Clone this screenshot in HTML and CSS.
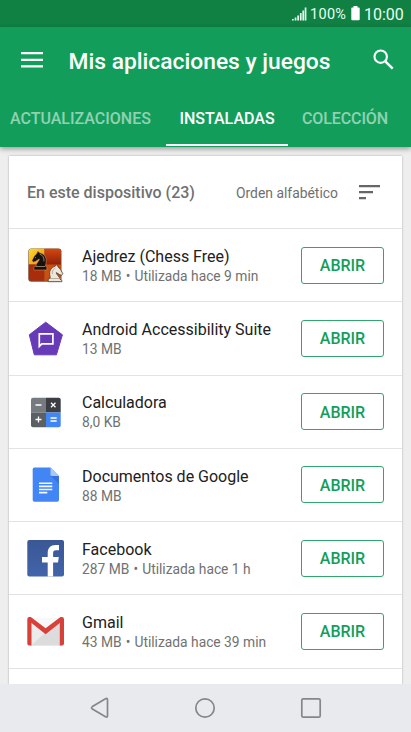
FILE: index.html
```html
<!DOCTYPE html>
<html lang="es">
<head>
<meta charset="utf-8">
<title>Mis aplicaciones y juegos</title>
<link rel="stylesheet" href="styles.css">
</head>
<body>
<div class="screen">
  <div class="status">
    <svg class="signal" width="15" height="14" viewBox="0 0 15 14" fill="#e6fff1"><path d="M0 13.500v-1.500h1.700V13.500zM2.700 13.500v-3h1.700v3zM5.300 13.500V8.500H7v5zM7.900 13.500V6h1.700V13.500zM10.400 13.500V3.500h1.700v10zM12.700 13.500V.5h1.700V13.500z"/></svg>
    <span class="pct">100%</span>
    <svg class="battery" width="9" height="15" viewBox="0 0 9 15" fill="#fff"><path d="M2.500 0h4v1.500H8q.7 0 .7.8v11q0 .9-.9.9H1.200q-.9 0-.9-.9v-11q0-.8.7-.8h1.500z"/></svg>
    <span class="clock">10:00</span>
  </div>
  <header class="appbar">
    <div class="toolbar">
      <svg class="menu" width="22" height="16" viewBox="0 0 22 16" fill="#fff"><path d="M0 0h22v2.200H0zM0 6.700h22v2.200H0zM0 13.300h22v2.200H0z"/></svg>
      <h1>Mis aplicaciones y juegos</h1>
      <svg class="search" width="21" height="21" viewBox="0 0 21 21" fill="none" stroke="#fff" stroke-width="2.100"><circle cx="7.700" cy="7.700" r="6.200"/><path d="M12.300 12.300l7.400 7.400" stroke-width="2.500"/></svg>
    </div>
    <nav class="tabs">
      <span class="tab t1">ACTUALIZACIONES</span>
      <span class="tab t2 active">INSTALADAS</span>
      <span class="tab t3">COLECCIÓN</span>
    </nav>
  </header>
  <main class="content">
    <section class="card">
      <div class="head">
        <h2>En este dispositivo (23)</h2>
        <span class="order">Orden alfabético</span>
        <svg width="21" height="15" viewBox="0 0 21 15" fill="#666"><path d="M0 0h21v2.300H0zM0 6h14v2.300H0zM0 12h7v2.300H0z"/></svg>
      </div>
      <article class="row">
        <svg class="icon" viewBox="0 0 48 48">
          <defs>
            <linearGradient id="yel" x2="1" y2="1"><stop stop-color="#ffe02a"/><stop offset="1" stop-color="#ee8a0c"/></linearGradient>
            <linearGradient id="red" x2="0" y2="1"><stop stop-color="#d94a10"/><stop offset="1" stop-color="#8d1f08"/></linearGradient>
            <clipPath id="board"><rect x="7.800" y="7.800" width="32" height="32" rx="2.500"/></clipPath>
          </defs>
          <rect x="7.300" y="7.500" width="33.200" height="33.200" rx="3" fill="#755643"/>
          <g clip-path="url(#board)"><path fill="url(#yel)" d="M7 7h16.500v16.500H7z"/><path fill="url(#red)" d="M23.500 7H41v17H23.500z"/><path fill="#a92d0d" d="M7 23.500h16.500V41H7z"/><path fill="#c9500f" d="M23.500 23.500H41V41H23.500z"/></g>
          <path fill="#17120f" stroke="#e2a266" stroke-width=".5" d="M12.800 29v-2.700l2.200-1.300c0-3 3-4.300 3.300-7l-3.500 2.200-2.400 1-1.400-1.700 2.200-4.200 2.700-3 .8-2.300 2 1.800c4.500.8 6.800 4.500 6.600 8.500l-.8 4.700 1.300 1.300V29z"/>
          <path stroke="#d8c4a6" stroke-width=".6" fill="none" d="M15 25.500h9M18.700 13.200c3.500 1 4.500 4 4.200 7.300M14 17l1-.7"/>
          <path fill="#eee7d9" stroke="#4b392d" stroke-width=".8" d="M27.200 40.700v-2.500l2-1.300-.5-3.600c-.4-4.200 2-7 5.700-8.200l1.700-1.800 1 2.600 2.500 2.700 2.200 4-1.300 1.800-2-.8-3.200-2c.5 2.700 3.500 4 3.600 6.500l2 1.300v1.300z"/>
          <path stroke="#a49885" stroke-width=".7" fill="none" d="M29 37.500h11M34.500 27c-2.500 1-3.500 3-3.200 6"/>
        </svg>
        <div class="info"><h3>Ajedrez (Chess Free)</h3><p>18 MB <i>•</i> Utilizada hace 9 min</p></div>
        <button>ABRIR</button>
      </article>
      <article class="row">
        <svg class="icon" viewBox="0 0 48 48"><path fill="#673ab7" stroke="#673ab7" stroke-linejoin="round" d="M24.700 8.200L41.400 20.800l-6 20H13.300l-5-20z"/><path fill="none" stroke="#fff" stroke-width="1.700" d="M18.300 19.900h13.600v10H20.800l-2.500 2.500z"/></svg>
        <div class="info"><h3>Android Accessibility Suite</h3><p>13 MB</p></div>
        <button>ABRIR</button>
      </article>
      <article class="row">
        <svg class="icon" viewBox="0 0 48 48"><clipPath id="calc"><rect x="10" y="9.700" width="29.700" height="29.500" rx="2"/></clipPath><g clip-path="url(#calc)"><path fill="#757b7e" d="M10 9h15v15.500H10z"/><path fill="#3b3e42" d="M25 9h15v15.500H25z"/><path fill="#5b6064" d="M10 24.500h15V40H10z"/><path fill="#4285f4" d="M25 24.500h15V40H25z"/></g><path fill="none" stroke="#fff" stroke-width="1.300" d="M14.500 17h6M30 14.700l4.500 4.500m0-4.500L30 19.200M14.500 31.500h6m-3-3v6M29.500 30h6.200M29.500 33h6.200"/></svg>
        <div class="info"><h3>Calculadora</h3><p>8,0 KB</p></div>
        <button>ABRIR</button>
      </article>
      <article class="row">
        <svg class="icon" viewBox="0 0 48 48"><path fill="#4285f4" d="M13.500 6.500H29.500L38 15v24q0 1.800-1.800 1.800H13.500q-1.800 0-1.800-1.800V8.300q0-1.800 1.800-1.800z"/><path fill="#3871dc" d="M30 15h8v8z"/><path fill="#a9c7fb" d="M29.500 6.500L38 15h-7q-1.500 0-1.500-1.500z"/><path stroke="#f4f8ff" stroke-width="1.600" d="M18 22.300h13.300M18 25.400h13.300M18 28.500h13.300M18 31.600h8.300"/></svg>
        <div class="info"><h3>Documentos de Google</h3><p>88 MB</p></div>
        <button>ABRIR</button>
      </article>
      <article class="row">
        <svg class="icon" viewBox="0 0 48 48"><defs><linearGradient id="fb" x2="0" y2="1"><stop stop-color="#3a5795"/><stop offset="1" stop-color="#4264aa"/></linearGradient></defs><rect x="6.300" y="5.900" width="36.700" height="36.700" rx="2" fill="url(#fb)"/><path fill="#fff" d="M26.700 42.600V28.500H21v-5.400h5.700v-4.200c0-5.200 3-8 7.900-8l3.400.2v5.200h-2.800c-2.500 0-3.100 1.200-3.100 3v3.800h5.700l-.8 5.400h-4.900v14.100z"/></svg>
        <div class="info"><h3>Facebook</h3><p>287 MB <i>•</i> Utilizada hace 1 h</p></div>
        <button>ABRIR</button>
      </article>
      <article class="row">
        <svg class="icon" viewBox="0 0 48 48"><path fill="#ececec" d="M7 11h35v27.500H7z"/><path fill="#dcdcdc" d="M10 38.500l14.600-13 15 13z"/><path fill="#f8f8f8" d="M10 11h29L24.600 25z"/><path fill="#c9c9c9" d="M24.600 25.500L39 14v24.500z" opacity=".45"/><path fill="#d8403a" d="M8.300 10h1.500l14.800 11.200L39.500 10h1.300q2.200 0 2.200 2.300v24.200q0 2-2 2h-2.200V16L24.600 27.200 10.500 16v22.500H8.300q-2 0-2-2V12.300Q6.300 10 8.300 10z"/></svg>
        <div class="info"><h3>Gmail</h3><p>43 MB <i>•</i> Utilizada hace 39 min</p></div>
        <button>ABRIR</button>
      </article>
    </section>
  </main>
  <footer class="navbar">
    <svg width="20" height="22" viewBox="0 0 20 22"><path d="M2.400 9.600L15.500 1.800q2-1 2 1v15.900q0 2-2 1L2.400 12q-1.800-1.200 0-2.400z"/></svg>
    <svg width="22" height="22" viewBox="0 0 22 22"><circle cx="11" cy="11" r="9.200"/></svg>
    <svg width="22" height="22" viewBox="0 0 22 22"><rect x="1.800" y="1.800" width="18.400" height="18.400" rx="1.500"/></svg>
  </footer>
</div>
</body>
</html>
```
FILE: styles.css
```css
* { box-sizing: border-box; margin: 0; padding: 0; }
body { font-family: Roboto, "Liberation Sans", sans-serif; background: #eee; }
.screen { width: 411px; height: 732px; display: flex; flex-direction: column; overflow: hidden; }
span, h1, h2, h3, p { white-space: nowrap; }
.status { height: 27px; flex: none; background: #108043; color: #e6fff1; display: flex; align-items: center; padding: 2px 0 0 292px; }
.signal { margin-top: -1px; }
.pct { font-size: 14.500px; margin-left: 3px; width: 38px; letter-spacing: .3px; }
.battery { margin-left: 3px; margin-top: -2px; }
.clock { font-size: 16px; margin-left: 4px; }
.appbar { height: 119.500px; flex: none; background: #129e5a; box-shadow: 0 2px 5px rgba(0,0,0,.35); display: flex; flex-direction: column; position: relative; z-index: 1; }
.toolbar { height: 64px; display: flex; align-items: center; padding: 0 17px 0 21px; }
.menu { margin-top: 2px; }
h1 { font-size: 22.800px; font-weight: 500; color: #fff; margin: 5px auto 0 25.500px; }
.search { margin-top: 1px; }
.tabs { flex: 1; display: flex; color: rgba(255,255,255,.55); font-size: 16px; font-weight: 500; line-height: 56px; }
.t1 { padding-left: 10px; width: 166px; }
.t2 { width: 122px; height: 55.500px; text-align: center; border-bottom: 2.500px solid #fff; color: #fff; }
.t3 { padding-left: 14px; letter-spacing: -.1px; }
.content { flex: 1; min-height: 0; overflow: hidden; padding: 9.500px 9px 0; background: #eee; }
.card { background: #fff; height: 560px; box-shadow: 0 0 2px rgba(0,0,0,.3); }
.head { height: 73px; border-bottom: 1.500px solid #e2e2e2; display: flex; align-items: center; padding: 0 22px 0 18px; color: #707070; }
h2 { font-size: 16px; font-weight: 500; margin-right: auto; }
.order { font-size: 13.900px; margin: 1px 21px 0 0; }
.row { height: 73.250px; border-bottom: 1.500px solid #e2e2e2; display: flex; align-items: center; padding: 0 18px 0 12px; }
.icon { width: 48px; height: 48px; flex: none; }
.info { margin-left: 13px; padding-top: 1.500px; flex: 1; }
h3 { font-size: 16px; font-weight: 400; color: #212121; line-height: 20px; }
p { font-size: 13.800px; color: #717171; line-height: 18px; }
p i { font-style: normal; margin: 0 .7px; }
button { width: 83px; height: 37px; padding-top: 1px; flex: none; border: 1px solid #30a66c; border-radius: 3px; background: #fff; color: #129e5a; font: 500 16px Roboto, sans-serif; }
.navbar { height: 48px; flex: none; background: #e9eaee; display: flex; align-items: center; justify-content: space-between; padding: 0 89px 0 90px; }
.navbar svg { fill: none; stroke: #85868a; stroke-width: 1.700; }
```
